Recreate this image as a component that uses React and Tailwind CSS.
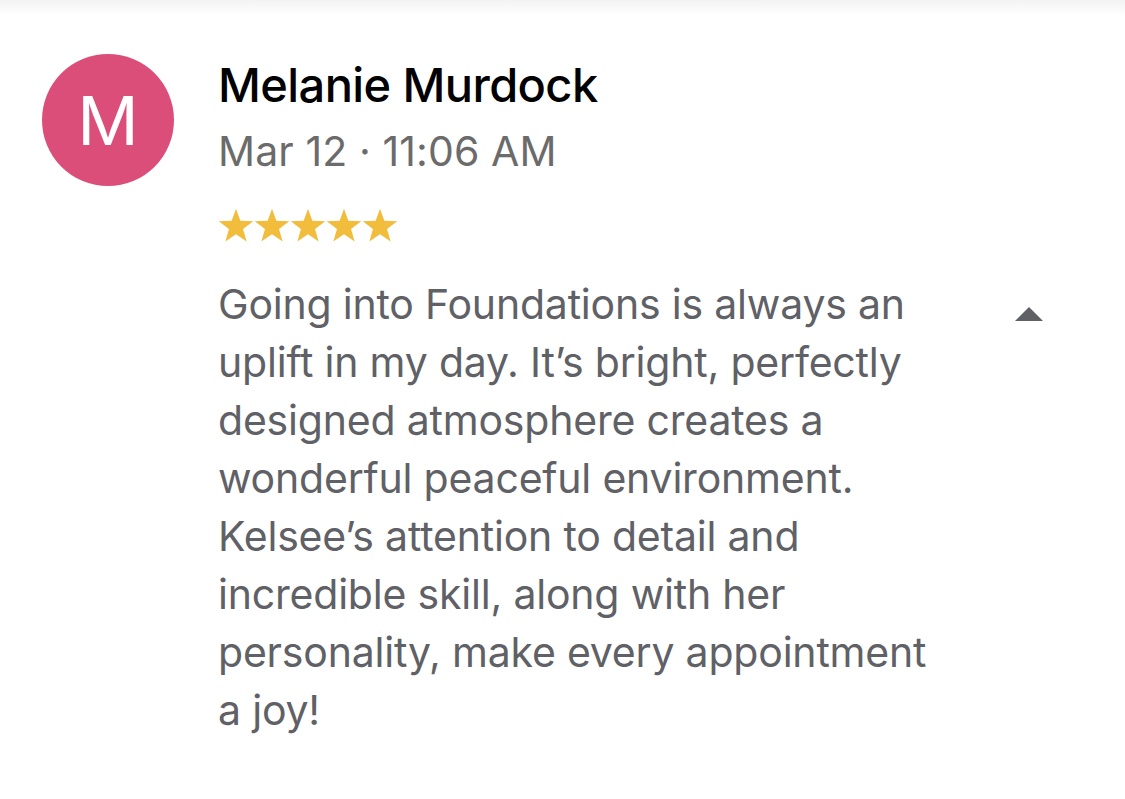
export default function App() {
  const body =
    "Going into Foundations is always an uplift in my day. It\u2019s bright, perfectly designed atmosphere creates a wonderful peaceful environment. Kelsee\u2019s attention to detail and incredible skill, along with her personality, make every appointment a joy!";

  return (
    <div className="min-h-screen w-[1125px] h-[799px] bg-white font-['Inter',sans-serif] relative overflow-hidden">
      {/* faint top shadow */}
      <div className="h-[16px] bg-gradient-to-b from-[#f3f3f3] to-white" />

      <div className="flex pl-[42px] pt-[38px]">
        <div className="w-[132px] h-[132px] rounded-full bg-[#dc4e7a] text-white flex items-center justify-center text-[68px] font-normal shrink-0 leading-none">
          M
        </div>

        <div className="ml-[44px] flex-1">
          <p className="text-[47px] leading-[56px] text-black font-medium tracking-[-0.6px] mt-[3px]">
            Melanie Murdock
          </p>
          <p className="text-[41px] leading-[50px] text-[#6b6b6b] tracking-[0.1px] mt-[13px]">
            Mar 12 · 11:06 AM
          </p>

          <div className="flex mt-[32px] text-[#f2bd3c]">
            {[0, 1, 2, 3, 4].map((i) => (
              <svg key={i} width="36" height="35" viewBox="0 0 24 23">
                <path
                  fill="currentColor"
                  d="M12 0.3l2.9 8 8.6.3-6.8 5.3 2.4 8.3L12 17.4l-7.1 4.8 2.4-8.3L0.5 8.6l8.6-.3z"
                />
              </svg>
            ))}
          </div>

          <div className="flex mt-[32px]">
            <p className="w-[720px] text-[41px] leading-[58px] text-[#5f6166] tracking-[-0.2px]">
              {body}
            </p>
            <div className="ml-[76px] mt-[31px]">
              <svg width="30" height="16" viewBox="0 0 30 16">
                <path d="M15 1 L29 15 L1 15 Z" fill="#5f6166" />
              </svg>
            </div>
          </div>
        </div>
      </div>
    </div>
  );
}
